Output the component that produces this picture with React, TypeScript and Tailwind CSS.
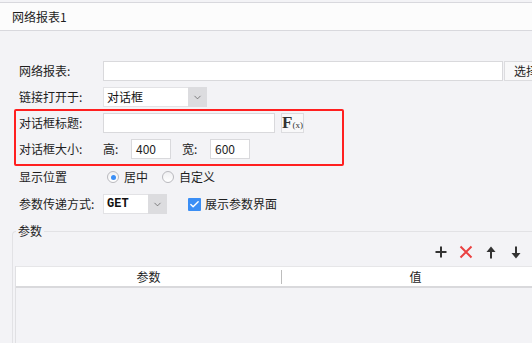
import { Check, ChevronDown } from "lucide-react";

const font = { fontFamily: '"Noto Sans CJK SC", "Noto Sans", sans-serif' };

function Label({ children }: { children: React.ReactNode }) {
    return <div className="w-[84px] shrink-0 text-[12px] leading-[20px] text-[#1e1e1e]">{children}</div>;
}

function Input({ value, className }: { value?: string; className: string }) {
    return (
        <div className={`h-[20px] shrink-0 border border-[#d9d9dc] bg-white px-[4px] text-[12px] leading-[18px] text-[#1e1e1e] ${className}`}>
            {value}
        </div>
    );
}

function Select({ value, textW, mono }: { value: string; textW: string; mono?: boolean }) {
    return (
        <div className="flex h-[20px] shrink-0">
            <div className={`${textW} border border-r-0 border-[#e2e2e5] bg-white px-[3px] text-[12px] leading-[18px] text-[#111] ${mono ? "font-bold" : ""}`}
                style={mono ? { fontFamily: '"Liberation Mono", monospace' } : undefined}>
                {value}
            </div>
            <div className="flex w-[19px] items-center justify-center bg-[#dcdcdf]">
                <ChevronDown className="size-[11px] text-[#555]" strokeWidth={1.5} />
            </div>
        </div>
    );
}

function Radio({ on }: { on?: boolean }) {
    return (
        <div className="flex size-[12px] items-center justify-center rounded-full border border-[#b9b9be] bg-gradient-to-b from-[#f0f0f2] to-white">
            {on && <div className="size-[5px] rounded-full bg-[#3a8ef5]" />}
        </div>
    );
}

export default function App() {
    return (
        <div className="h-[343px] w-[532px] overflow-hidden bg-[#f3f3f6] pt-[2px]" style={font}>
            <div className="flex h-[29px] items-center border-y border-[#d8d8dd] bg-[#fcfcfc] pl-[12px] text-[12px] text-[#1e1e1e]">
                网络报表1
            </div>

            <div className="mt-[30px] flex flex-col">
                <div className="ml-[19px] flex items-center">
                    <Label>网络报表:</Label>
                    <Input className="w-[400px]" />
                    <div className="ml-[1px] h-[20px] w-[40px] shrink-0 border border-[#dcdcdf] bg-[#f8f8f9] pl-[9px] text-[12px] leading-[18px] text-[#1e1e1e]">
                        选择
                    </div>
                </div>

                <div className="ml-[19px] mt-[6px] flex items-center">
                    <Label>链接打开于:</Label>
                    <Select value="对话框" textW="w-[85px]" />
                </div>

                <div className="ml-[14px] mt-[2px] flex h-[57px] w-[330px] flex-col gap-[6px] rounded-[2px] border-2 border-[#ff1f1f] pl-[3px] pt-[2px]">
                    <div className="flex items-center">
                        <Label>对话框标题:</Label>
                        <Input className="w-[172px]" />
                        <div className="ml-[6px] flex h-[20px] w-[23px] items-end justify-center border border-[#dcdcdf] bg-[#f8f8f9] pb-[1px] text-[#333]"
                            style={{ fontFamily: '"Liberation Serif", serif' }}>
                            <span className="text-[17px] font-bold leading-[17px]">F</span>
                            <span className="text-[9px] leading-[12px]">(x)</span>
                        </div>
                    </div>
                    <div className="flex items-center">
                        <Label>对话框大小:</Label>
                        <div className="w-[28px] text-[12px] text-[#1e1e1e]">高:</div>
                        <Input value="400" className="w-[40px]" />
                        <div className="ml-[11px] w-[28px] text-[12px] text-[#1e1e1e]">宽:</div>
                        <Input value="600" className="w-[40px]" />
                    </div>
                </div>

                <div className="ml-[19px] mt-[1px] flex h-[20px] items-center">
                    <Label>显示位置</Label>
                    <div className="ml-[4px] flex items-center gap-[5px] text-[12px] text-[#1e1e1e]">
                        <Radio on />
                        居中
                    </div>
                    <div className="ml-[14px] flex items-center gap-[5px] text-[12px] text-[#1e1e1e]">
                        <Radio />
                        自定义
                    </div>
                </div>

                <div className="ml-[19px] mt-[7px] flex items-center">
                    <Label>参数传递方式:</Label>
                    <Select value="GET" textW="w-[45px]" mono />
                    <div className="ml-[21px] flex size-[13px] items-center justify-center rounded-[1px] bg-[#3a8ef5]">
                        <Check className="size-[11px] text-white" strokeWidth={3} />
                    </div>
                    <div className="ml-[4px] text-[12px] text-[#1e1e1e]">展示参数界面</div>
                </div>

                <div className="relative ml-[12px] mt-[17px] h-[120px] rounded-tl-[4px] border-l border-t border-[#e2e2e5]">
                    <div className="absolute -top-[9px] left-[3px] bg-[#f3f3f6] px-[2px] text-[12px] leading-[16px] text-[#1e1e1e]">
                        参数
                    </div>
                    <div className="mr-[11px] mt-[13px] flex h-[14px] justify-end">
                        <svg width="12" height="12" viewBox="0 0 12 12" className="mt-[1px]">
                            <path d="M6 0.5v11M0.5 6h11" stroke="#333" strokeWidth="2" />
                        </svg>
                        <svg width="14" height="14" viewBox="0 0 14 14" className="ml-[12px]">
                            <path d="M1.5 1.5l11 11M12.5 1.5l-11 11" stroke="#ea4141" strokeWidth="2" />
                        </svg>
                        <svg width="10" height="13" viewBox="0 0 10 13" className="ml-[13px] mt-[1px]">
                            <path d="M5 12.5V3" stroke="#333" strokeWidth="2" />
                            <path d="M5 0.5L9.5 6H0.5z" fill="#333" />
                        </svg>
                        <svg width="10" height="13" viewBox="0 0 10 13" className="ml-[15px] mt-[1px]">
                            <path d="M5 0.5V10" stroke="#333" strokeWidth="2" />
                            <path d="M5 12.5L9.5 7H0.5z" fill="#333" />
                        </svg>
                    </div>
                    <div className="ml-[2px] mt-[7px] h-[100px] w-[540px] border-l border-[#e0e0e3]">
                        <div className="flex h-[20px] items-center border-t border-[#e6e6e8] bg-white text-[12px] text-[#1e1e1e]">
                            <div className="w-[265px] text-center">参数</div>
                            <div className="h-[14px] w-px bg-[#bdbdbd]" />
                            <div className="w-[267px] text-center">值</div>
                        </div>
                        <div className="h-[2px] bg-[#d9d9dc]" />
                    </div>
                </div>
            </div>
        </div>
    );
}
